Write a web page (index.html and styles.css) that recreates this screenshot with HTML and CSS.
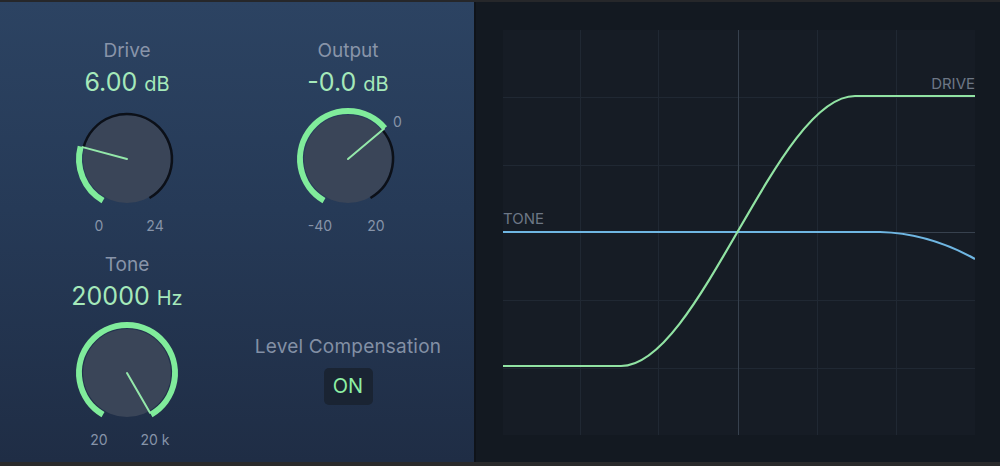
FILE: index.html
```html
<!DOCTYPE html>
<html>
<head>
<meta charset="utf-8">
<link rel="stylesheet" href="styles.css">
</head>
<body>
<div class="app">
  <div class="controls">
    <div class="ctl">
      <div class="lbl">Drive</div>
      <div class="val"><span class="num">6.00</span> <span class="unit">dB</span></div>
      <div class="knob">
        <svg width="110" height="110" viewBox="0 0 110 110">
          <circle class="body" cx="55" cy="55" r="44"/>
          <path class="track" d="M11.53 43.35 A45 45 0 1 1 77.5 93.97"/>
          <path class="arc" d="M31 96.57 A48 48 0 0 1 8.64 42.58"/>
          <line class="ptr" x1="55" y1="55" x2="10.6" y2="43.1"/>
        </svg>
      </div>
      <div class="scale"><span>0</span><span>24</span></div>
    </div>
    <div class="ctl">
      <div class="lbl">Output</div>
      <div class="val"><span class="num">-0.0</span> <span class="unit">dB</span></div>
      <div class="knob">
        <svg width="110" height="110" viewBox="0 0 110 110">
          <circle class="body" cx="55" cy="55" r="44"/>
          <path class="track" d="M89.47 26.07 A45 45 0 0 1 77.5 93.97"/>
          <path class="arc" d="M31 96.57 A48 48 0 1 1 91.77 24.15"/>
          <line class="ptr" x1="55" y1="55" x2="91" y2="24.8"/>
        </svg>
        <span class="zero">0</span>
      </div>
      <div class="scale"><span>-40</span><span>20</span></div>
    </div>
    <div class="ctl">
      <div class="lbl">Tone</div>
      <div class="val"><span class="num">20000</span> <span class="unit">Hz</span></div>
      <div class="knob">
        <svg width="110" height="110" viewBox="0 0 110 110">
          <circle class="body" cx="55" cy="55" r="44"/>
          <path class="arc" d="M31 96.57 A48 48 0 1 1 79 96.57"/>
          <line class="ptr" x1="55" y1="55" x2="78" y2="94.8"/>
        </svg>
      </div>
      <div class="scale"><span>20</span><span>20 k</span></div>
    </div>
    <div class="lc">
      <div class="lc-lbl">Level Compensation</div>
      <div class="on">ON</div>
    </div>
  </div>
  <div class="graph-panel">
    <div class="graph">
      <svg width="472" height="405" viewBox="0 0 472 405">
        <g class="grid">
          <line x1="77.5" y1="0" x2="77.5" y2="405"/>
          <line x1="155.5" y1="0" x2="155.5" y2="405"/>
          <line x1="314.5" y1="0" x2="314.5" y2="405"/>
          <line x1="393.5" y1="0" x2="393.5" y2="405"/>
          <line x1="0" y1="67.5" x2="472" y2="67.5"/>
          <line x1="0" y1="135.5" x2="472" y2="135.5"/>
          <line x1="0" y1="270.5" x2="472" y2="270.5"/>
          <line x1="0" y1="338.5" x2="472" y2="338.5"/>
        </g>
        <g class="axis">
          <line x1="235.5" y1="0" x2="235.5" y2="405"/>
          <line x1="0" y1="202.5" x2="472" y2="202.5"/>
        </g>
        <path class="tone-curve" d="M0 202 H377 C417 203 447 215 472 229"/>
        <path class="drive-curve" d="M0 336 H118 C196 336 274 66 352 66 H472"/>
        <text class="glabel" x="0" y="194">TONE</text>
        <text class="glabel" x="472" y="59" text-anchor="end">DRIVE</text>
      </svg>
    </div>
  </div>
</div>
</body>
</html>
```

FILE: styles.css
```css
html, body {
  margin: 0;
  padding: 0;
  background: #2a2a2b;
}

.app {
  width: 1000px;
  height: 466px;
  box-sizing: border-box;
  border-top: 2px solid #26272a;
  border-bottom: 4px solid #2a2a2b;
  display: flex;
  font-family: Inter, "Noto Sans", sans-serif;
}

.controls {
  width: 474px;
  box-sizing: border-box;
  background: linear-gradient(180deg, #2c4362 0%, #263a57 45%, #1f2d45 100%);
  display: grid;
  grid-template-columns: 254px 188px;
  grid-template-rows: 193px 193px;
  row-gap: 21px;
  padding-top: 38px;
  align-content: start;
}

.ctl {
  display: flex;
  flex-direction: column;
  align-items: center;
}

.lbl {
  font-size: 19px;
  line-height: 22px;
  color: #8894a9;
}

.val {
  margin-top: 6px;
  font-size: 25px;
  line-height: 28px;
  color: #a5e9ba;
  white-space: nowrap;
}

.val .unit {
  font-size: 20px;
}

.knob {
  position: relative;
  width: 110px;
  height: 110px;
  margin-top: 6px;
}

.knob svg {
  display: block;
}

.knob .body {
  fill: #3a4558;
}

.knob .track {
  fill: none;
  stroke: #0c1018;
  stroke-width: 2.5;
}

.knob .arc {
  fill: none;
  stroke: #80ec9b;
  stroke-width: 6;
}

.knob .ptr {
  stroke: #94e8aa;
  stroke-width: 2;
  stroke-linecap: round;
}

.zero {
  position: absolute;
  left: 100px;
  top: 10px;
  font-size: 14px;
  line-height: 16px;
  color: #8794a9;
}

.scale {
  margin-top: 4px;
  display: flex;
  gap: 26px;
  font-size: 14px;
  line-height: 16px;
  color: #8794a9;
}

.scale span {
  width: 30px;
  text-align: center;
  white-space: nowrap;
}

.lc {
  display: flex;
  flex-direction: column;
  align-items: center;
  padding-top: 82px;
}

.lc-lbl {
  font-size: 19px;
  line-height: 22px;
  letter-spacing: 0.2px;
  color: #8390a5;
  white-space: nowrap;
}

.on {
  margin-top: 10px;
  width: 49px;
  height: 37px;
  box-sizing: border-box;
  border-radius: 5px;
  background: #1a2433;
  color: #8ef0a4;
  font-size: 20px;
  line-height: 37px;
  text-align: center;
}

.graph-panel {
  flex: 1;
  background: #131921;
  border-left: 2px solid #0f1319;
  padding: 28px 25px 27px 27px;
}

.graph {
  width: 472px;
  height: 405px;
  background: #161c25;
}

.graph svg {
  display: block;
}

.grid line {
  stroke: #202833;
  stroke-width: 1;
}

.axis line {
  stroke: #37414e;
  stroke-width: 1;
}

.drive-curve {
  fill: none;
  stroke: #91e3a3;
  stroke-width: 2.2;
}

.tone-curve {
  fill: none;
  stroke: #6fb6e2;
  stroke-width: 2.2;
}

.glabel {
  font-family: Inter, "Noto Sans", sans-serif;
  font-size: 15px;
  fill: #6d7785;
}
```
